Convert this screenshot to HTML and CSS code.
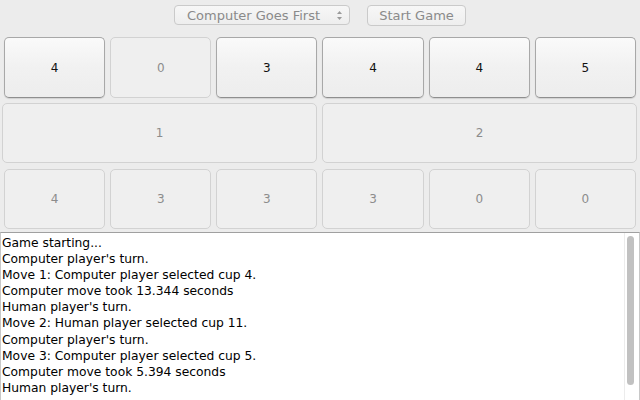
FILE: index.html
```html
<!DOCTYPE html>
<html>
<head>
<meta charset="utf-8">
<link rel="stylesheet" href="styles.css">
</head>
<body>
<div class="app">
  <div class="toolbar">
    <div class="select">
      <span class="select-label">Computer Goes First</span>
      <svg class="arrows" width="7" height="11" viewBox="0 0 7 11">
        <path d="M1 4 L3.5 1 L6 4 Z" fill="#9a9a9a"/>
        <path d="M1 7 L3.5 10 L6 7 Z" fill="#9a9a9a"/>
      </svg>
    </div>
    <div class="btn start">Start Game</div>
  </div>
  <div class="row six">
    <div class="cup on">4</div>
    <div class="cup">0</div>
    <div class="cup on">3</div>
    <div class="cup on">4</div>
    <div class="cup on">4</div>
    <div class="cup on">5</div>
  </div>
  <div class="row two">
    <div class="cup">1</div>
    <div class="cup">2</div>
  </div>
  <div class="row six">
    <div class="cup">4</div>
    <div class="cup">3</div>
    <div class="cup">3</div>
    <div class="cup">3</div>
    <div class="cup">0</div>
    <div class="cup">0</div>
  </div>
  <div class="log">
    <div class="log-text">
      <div>Game starting...</div>
      <div>Computer player's turn.</div>
      <div>Move 1: Computer player selected cup 4.</div>
      <div>Computer move took 13.344 seconds</div>
      <div>Human player's turn.</div>
      <div>Move 2: Human player selected cup 11.</div>
      <div>Computer player's turn.</div>
      <div>Move 3: Computer player selected cup 5.</div>
      <div>Computer move took 5.394 seconds</div>
      <div>Human player's turn.</div>
    </div>
    <div class="scrollbar"><div class="thumb"></div></div>
  </div>
</div>
</body>
</html>
```
FILE: styles.css
```css
html, body {
  margin: 0;
  padding: 0;
  background: #ececec;
}
.app {
  width: 640px;
  height: 400px;
  display: flex;
  flex-direction: column;
  font-family: "DejaVu Sans", "Liberation Sans", sans-serif;
  overflow: hidden;
}
.toolbar {
  display: flex;
  justify-content: center;
  align-items: center;
  gap: 17px;
  padding-top: 5px;
  height: 20px;
}
.select {
  width: 174px;
  height: 18px;
  border: 1px solid #cacaca;
  border-radius: 4px;
  background: linear-gradient(#f7f7f7, #eeeeee);
  display: flex;
  align-items: center;
  box-sizing: content-box;
}
.select-label {
  flex: 1;
  padding-left: 12px;
  font-size: 13px;
  color: #8a8a8a;
}
.arrows {
  margin-right: 6px;
}
.btn {
  border: 1px solid #cacaca;
  border-radius: 4px;
  background: linear-gradient(#f7f7f7, #eeeeee);
  color: #8a8a8a;
  font-size: 13px;
  display: flex;
  align-items: center;
  justify-content: center;
}
.start {
  width: 97px;
  height: 19px;
}
.row {
  display: grid;
  gap: 5px;
}
.six {
  grid-template-columns: repeat(6, 1fr);
  padding: 0 4px 0 4px;
  height: 61px;
}
.toolbar + .row {
  margin-top: 12px;
}
.two {
  grid-template-columns: repeat(2, 1fr);
  padding: 0 3px 0 2px;
  height: 60px;
  margin-top: 5px;
}
.two + .six {
  margin-top: 6px;
  height: 60px;
}
.cup {
  border: 1px solid #d2d2d2;
  border-radius: 5px;
  background: #efefef;
  color: #8c8c8c;
  font-size: 12px;
  display: flex;
  align-items: center;
  justify-content: center;
  box-sizing: border-box;
}
.cup.on {
  border: 1px solid #a8a8a8;
  border-bottom-color: #8e8e8e;
  background: linear-gradient(#fafafa, #f1f1f1 50%, #ededed);
  color: #111;
  box-shadow: 0 1px 1px rgba(0,0,0,0.12);
}
.log {
  flex: 1;
  margin-top: 3px;
  background: #fff;
  border-top: 1px solid #a0a0a0;
  border-left: 1px solid #c8c8c8;
  border-right: 1px solid #c8c8c8;
  display: flex;
  min-height: 0;
}
.log-text {
  flex: 1;
  padding: 2px 0 0 1px;
  font-size: 12.3px;
  line-height: 16.1px;
  color: #000;
}
.scrollbar {
  width: 14px;
  border-left: 1px solid #ececec;
  padding: 3px 0 0 2px;
  box-sizing: border-box;
  margin-right: 1px;
}
.thumb {
  width: 7px;
  height: 149px;
  border-radius: 4px;
  background: #c1c1c1;
}
```
